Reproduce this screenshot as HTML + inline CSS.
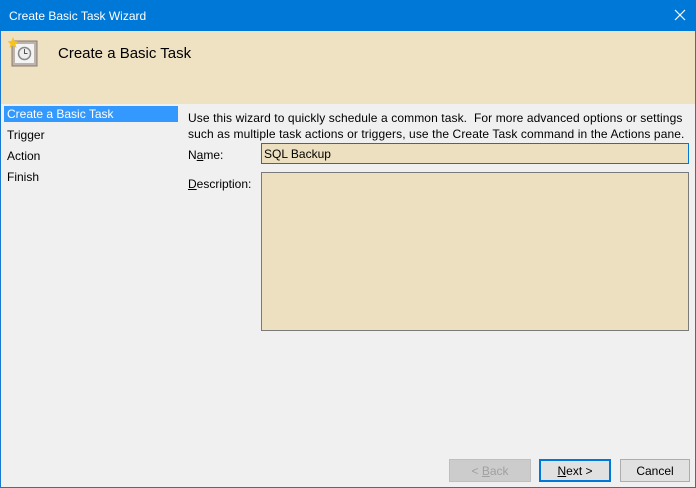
<!DOCTYPE html>
<html><head><style>
*{margin:0;padding:0;box-sizing:border-box}
body{width:696px;height:488px;background:#f0f0f0;font-family:"Liberation Sans",sans-serif;font-size:12px;color:#000;position:relative;overflow:hidden}
.a{position:absolute}
u{text-decoration:underline}
.btn{position:absolute;top:459px;height:23px;border:1px solid #adadad;background:#e1e1e1;text-align:center;line-height:22px;font-size:12px}
</style></head><body>
<div class="a" style="left:0;top:0;width:696px;height:488px;border:1px solid #1a78d0"></div>
<div class="a" style="left:0;top:0;width:696px;height:31px;background:#0078d7;color:#fff;font-size:12px;line-height:32px;padding-left:9px">Create Basic Task Wizard</div>
<svg class="a" style="left:674px;top:9px" width="12" height="12"><path d="M1 1L11 11M11 1L1 11" stroke="#fff" stroke-width="1.2"/></svg>
<div class="a" style="left:1px;top:31px;width:694px;height:73px;background:#efe2c2"></div>
<svg class="a" style="left:6px;top:36px" width="34" height="34" viewBox="0 0 34 34">
<rect x="6" y="5" width="25" height="25" fill="#bdb4ad" stroke="#8a7a70"/>
<rect x="9" y="8" width="19" height="19" fill="#f4f4f4"/>
<circle cx="18.5" cy="17.5" r="6" fill="#eee" stroke="#888" stroke-width="1.5"/>
<path d="M18.5 13v4.5h3" stroke="#555" fill="none"/>
<path d="M7 1l1.5 4 4 .5-3 2.5 1 4-3.5-2.5-3.5 2.5 1-4-3-2.5 4-.5z" fill="#f7c21b"/>
</svg>
<div class="a" style="left:58px;top:45px;font-size:15px">Create a Basic Task</div>
<div class="a" style="left:4px;top:106px;width:174px;height:16px;background:#3399ff;color:#fff;line-height:17px;padding-left:3px">Create a Basic Task</div>
<div class="a" style="left:7px;top:128px">Trigger</div>
<div class="a" style="left:7px;top:149px">Action</div>
<div class="a" style="left:7px;top:170px">Finish</div>
<div class="a" style="left:188px;top:110px;line-height:16px;white-space:nowrap;letter-spacing:0.1px">Use this wizard to quickly schedule a common task.&nbsp; For more advanced options or settings<br>such as multiple task actions or triggers, use the Create Task command in the Actions pane.</div>
<div class="a" style="left:188px;top:148px">N<u>a</u>me:</div>
<div class="a" style="left:261px;top:143px;width:428px;height:21px;border:1px solid #0078d7;background:#ede0c0;padding:3px 0 0 2px;line-height:14px">SQL Backup</div>
<div class="a" style="left:188px;top:177px"><u>D</u>escription:</div>
<div class="a" style="left:261px;top:172px;width:428px;height:159px;border:1px solid #7a7a7a;background:#ede0c0"></div>
<div class="btn" style="left:449px;width:82px;color:#a0a0a0;border-color:#bfbfbf;background:#cccccc">&lt; <u>B</u>ack</div>
<div class="btn" style="left:539px;width:72px;border:2px solid #0078d7;line-height:20px"><u>N</u>ext &gt;</div>
<div class="btn" style="left:620px;width:70px">Cancel</div>
</body></html>
